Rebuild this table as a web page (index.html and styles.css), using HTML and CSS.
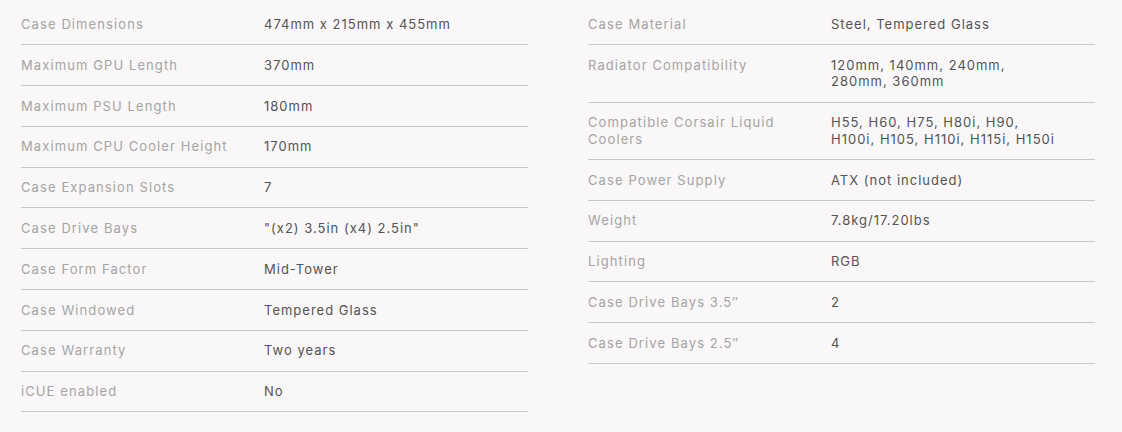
FILE: index.html
```html
<!DOCTYPE html>
<html>
<head>
<meta charset="utf-8">
<link rel="stylesheet" href="styles.css">
</head>
<body>
<div class="specs">
  <div class="col">
    <div class="row"><div class="label">Case Dimensions</div><div class="value">474mm x 215mm x 455mm</div></div>
    <div class="row"><div class="label">Maximum GPU Length</div><div class="value">370mm</div></div>
    <div class="row"><div class="label">Maximum PSU Length</div><div class="value">180mm</div></div>
    <div class="row"><div class="label">Maximum CPU Cooler Height</div><div class="value">170mm</div></div>
    <div class="row"><div class="label">Case Expansion Slots</div><div class="value">7</div></div>
    <div class="row"><div class="label">Case Drive Bays</div><div class="value">"(x2) 3.5in (x4) 2.5in"</div></div>
    <div class="row"><div class="label">Case Form Factor</div><div class="value">Mid-Tower</div></div>
    <div class="row"><div class="label">Case Windowed</div><div class="value">Tempered Glass</div></div>
    <div class="row"><div class="label">Case Warranty</div><div class="value">Two years</div></div>
    <div class="row"><div class="label">iCUE enabled</div><div class="value">No</div></div>
  </div>
  <div class="col">
    <div class="row"><div class="label">Case Material</div><div class="value">Steel, Tempered Glass</div></div>
    <div class="row"><div class="label">Radiator Compatibility</div><div class="value">120mm, 140mm, 240mm, 280mm, 360mm</div></div>
    <div class="row"><div class="label">Compatible Corsair Liquid Coolers</div><div class="value">H55, H60, H75, H80i, H90, H100i, H105, H110i, H115i, H150i</div></div>
    <div class="row"><div class="label">Case Power Supply</div><div class="value">ATX (not included)</div></div>
    <div class="row"><div class="label">Weight</div><div class="value">7.8kg/17.20lbs</div></div>
    <div class="row"><div class="label">Lighting</div><div class="value">RGB</div></div>
    <div class="row"><div class="label">Case Drive Bays 3.5″</div><div class="value">2</div></div>
    <div class="row"><div class="label">Case Drive Bays 2.5″</div><div class="value">4</div></div>
  </div>
</div>
</body>
</html>
```

FILE: styles.css
```css
html, body {
  margin: 0;
  padding: 0;
  background: #f9f7f7;
}
body {
  font-family: "Inter", "Liberation Sans", sans-serif;
  font-size: 13px;
}
.specs {
  display: flex;
  gap: 60px;
  padding: 4.5px 26px 0 21px;
}
.col {
  flex: 0 0 507px;
  display: flex;
  flex-direction: column;
}
.row {
  display: flex;
  padding: 11.6px 0;
  line-height: 16.6px;
  border-bottom: 1px solid #c9c7c7;
}
.label {
  flex: 0 0 243px;
  box-sizing: border-box;
  padding-right: 14px;
  color: #a6a4a4;
  letter-spacing: 1.1px;
}
.value {
  width: 228px;
  color: #555353;
  letter-spacing: 1px;
}
```
